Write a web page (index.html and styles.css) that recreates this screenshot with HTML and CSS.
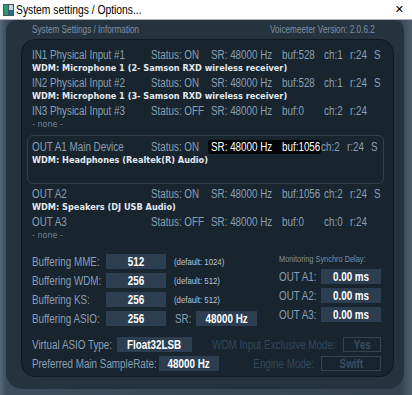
FILE: index.html
```html
<!DOCTYPE html>
<html lang="en">
<head>
    <meta charset="UTF-8">
    <title>System settings / Options...</title>
    <link rel="stylesheet" href="styles.css">
</head>
<body>
    <!-- Window title bar -->
    <div class="titlebar">
        <svg class="app-icon" width="11" height="12" viewBox="0 0 11 12">
            <rect x="0" y="0" width="11" height="12" fill="#3b5566"/>
            <rect x="1" y="1" width="4" height="10" fill="#2f9a6a"/>
            <rect x="6" y="1" width="4" height="10" fill="#c9d6df"/>
            <rect x="6" y="6" width="4" height="5" fill="#1d6f8c"/>
        </svg>
        <span class="title">System settings / Options...</span>
        <span class="close">✕</span>
    </div>

    <div class="window">
        <div class="frame">
            <div class="header">
                <span>System Settings / Information</span>
                <span>Voicemeeter Version: 2.0.6.2</span>
            </div>

            <div class="panel">
                <!-- Device list -->
                <div class="devices">
                    <div class="device">
                        <div class="dev-row">
                            <span class="c-name">IN1 Physical Input #1</span>
                            <span class="c-status">Status: ON</span>
                            <span class="c-sr">SR: 48000 Hz</span>
                            <span class="c-buf">buf:528</span>
                            <span class="c-ch">ch:1</span>
                            <span class="c-r">r:24</span>
                            <span class="c-s">S</span>
                        </div>
                        <div class="dev-driver">WDM: Microphone 1 (2- Samson RXD wireless receiver)</div>
                    </div>
                    <div class="device">
                        <div class="dev-row">
                            <span class="c-name">IN2 Physical Input #2</span>
                            <span class="c-status">Status: ON</span>
                            <span class="c-sr">SR: 48000 Hz</span>
                            <span class="c-buf">buf:528</span>
                            <span class="c-ch">ch:1</span>
                            <span class="c-r">r:24</span>
                            <span class="c-s">S</span>
                        </div>
                        <div class="dev-driver">WDM: Microphone 1 (3- Samson RXD wireless receiver)</div>
                    </div>
                    <div class="device">
                        <div class="dev-row">
                            <span class="c-name">IN3 Physical Input #3</span>
                            <span class="c-status">Status: OFF</span>
                            <span class="c-sr">SR: 48000 Hz</span>
                            <span class="c-buf">buf:0</span>
                            <span class="c-ch">ch:2</span>
                            <span class="c-r">r:24</span>
                        </div>
                        <div class="dev-none">- none -</div>
                    </div>

                    <div class="device main">
                        <div class="dev-row">
                            <span class="c-name">OUT A1 Main Device</span>
                            <span class="c-status">Status: ON</span>
                            <span class="hl">
                                <span class="c-sr">SR: 48000 Hz</span>
                                <span class="c-buf">buf:1056</span>
                            </span>
                            <span class="c-ch">ch:2</span>
                            <span class="c-r">r:24</span>
                            <span class="c-s">S</span>
                        </div>
                        <div class="dev-driver">WDM: Headphones (Realtek(R) Audio)</div>
                    </div>

                    <div class="device">
                        <div class="dev-row">
                            <span class="c-name">OUT A2</span>
                            <span class="c-status">Status: ON</span>
                            <span class="c-sr">SR: 48000 Hz</span>
                            <span class="c-buf">buf:1056</span>
                            <span class="c-ch">ch:2</span>
                            <span class="c-r">r:24</span>
                            <span class="c-s">S</span>
                        </div>
                        <div class="dev-driver">WDM: Speakers (DJ USB Audio)</div>
                    </div>
                    <div class="device">
                        <div class="dev-row">
                            <span class="c-name">OUT A3</span>
                            <span class="c-status">Status: OFF</span>
                            <span class="c-sr">SR: 48000 Hz</span>
                            <span class="c-buf">buf:0</span>
                            <span class="c-ch">ch:0</span>
                            <span class="c-r">r:24</span>
                        </div>
                        <div class="dev-none">- none -</div>
                    </div>
                </div>

                <!-- Buffering and delay settings -->
                <div class="settings">
                    <div class="buffering">
                        <div class="set-row">
                            <span class="set-label">Buffering MME:</span>
                            <span class="val w60"><span>512</span></span>
                            <span class="hint">(default: 1024)</span>
                        </div>
                        <div class="set-row">
                            <span class="set-label">Buffering WDM:</span>
                            <span class="val w60"><span>256</span></span>
                            <span class="hint">(default: 512)</span>
                        </div>
                        <div class="set-row">
                            <span class="set-label">Buffering KS:</span>
                            <span class="val w60"><span>256</span></span>
                            <span class="hint">(default: 512)</span>
                        </div>
                        <div class="set-row">
                            <span class="set-label">Buffering ASIO:</span>
                            <span class="val w60"><span>256</span></span>
                            <span class="sr-label">SR:</span>
                            <span class="val w61"><span>48000 Hz</span></span>
                        </div>
                    </div>

                    <div class="monitor">
                        <div class="monitor-title">Monitoring Synchro Delay:</div>
                        <div class="mon-row">
                            <span class="mon-label">OUT A1:</span>
                            <span class="val w60"><span>0.00 ms</span></span>
                        </div>
                        <div class="mon-row">
                            <span class="mon-label">OUT A2:</span>
                            <span class="val w60"><span>0.00 ms</span></span>
                        </div>
                        <div class="mon-row">
                            <span class="mon-label">OUT A3:</span>
                            <span class="val w60"><span>0.00 ms</span></span>
                        </div>
                    </div>
                </div>

                <div class="bottom-row first">
                    <div class="side">
                        <span class="set-label asio-label">Virtual ASIO Type:</span>
                        <span class="val asio"><span>Float32LSB</span></span>
                    </div>
                    <div class="side right">
                        <span class="dim-label">WDM Input Exclusive Mode:</span>
                        <span class="val dim yes"><span>Yes</span></span>
                    </div>
                </div>
                <div class="bottom-row">
                    <div class="side">
                        <span class="set-label pref-label">Preferred Main SampleRate:</span>
                        <span class="val pref"><span>48000 Hz</span></span>
                    </div>
                    <div class="side right">
                        <span class="dim-label">Engine Mode:</span>
                        <span class="val dim w60"><span>Swift</span></span>
                    </div>
                </div>
            </div>
        </div>
    </div>
</body>
</html>
```

FILE: styles.css
```css
/* Page = the dialog window */
body {
    margin: 0;
    width: 412px;
    height: 395px;
    overflow: hidden;
    font-family: "Liberation Sans", Arial, sans-serif;
    background-color: #3a4a58;
    white-space: nowrap;
}

/* The skin uses a narrow face: squeeze the text horizontally */
.title,
.header span,
.dev-row span,
.set-label,
.hint,
.sr-label,
.monitor-title,
.mon-label,
.dim-label,
.val span {
    display: inline-block;
    transform: scaleX(0.82);
    transform-origin: 0 50%;
}

.header span:last-child,
.dim-label {
    transform-origin: 100% 50%;
}

.val span {
    transform-origin: 50% 50%;
}

.dev-row .hl {
    transform: none;
}

/* Title bar */
.titlebar {
    height: 19px;
    background-color: #fff;
    border-bottom: 1px solid #aab3bb;
    display: flex;
    align-items: center;
    font-size: 12px;
    color: #000;
}

.app-icon {
    margin-left: 3px;
}

.titlebar .title {
    margin-left: 2px;
    transform: scaleX(0.86);
}

.close {
    margin-left: auto;
    margin-right: 8px;
    font-family: "DejaVu Sans", sans-serif;
    font-size: 11px;
}

/* Dark skin of the dialog */
.window {
    height: 375px;
    background: linear-gradient(90deg, #56687a 0, #3d4d5b 6px, #34434f 400px, #50606e 412px);
}

.frame {
    margin-left: 6px;
    width: 398px;
    height: 369px;
    box-sizing: border-box;
    padding: 0 10px 0 15px;
    background-color: #25333f;
    border-radius: 10px 10px 16px 16px;
}

.header {
    height: 19px;
    display: flex;
    justify-content: space-between;
    align-items: center;
    padding: 0 19px 0 11px;
    font-size: 10px;
    color: #7f8fa0;
}

.panel {
    height: 338px;
    box-sizing: border-box;
    padding: 7px 12px 0 10px;
    background-color: #18252f;
    border: 1px solid #0f1820;
    border-radius: 14px;
    color: #8a9fb3;
}

/* Device list */
.devices {
    margin-left: -5px;
    margin-right: -3px;
}

.device {
    padding-left: 5px;
}

.device.main {
    padding: 3px 0 16px 4px;
    border: 1px solid #2f4252;
    border-radius: 6px;
    margin: 4px 0 2px;
}

.dev-row {
    height: 15px;
    display: flex;
    align-items: center;
    font-size: 12px;
}

.dev-row span {
    flex: none;
}

.c-name { width: 119px; }
.c-status { width: 60px; }
.c-sr { width: 71px; }
.c-buf { width: 42px; }
.c-ch { width: 26px; }
.c-r { width: 24px; }

.dev-row .hl {
    display: flex;
    align-items: center;
    height: 14px;
    width: 110px;
    margin-left: -3px;
    padding-left: 3px;
    background-color: #030507;
    border-radius: 3px;
    color: #fff;
}

.hl .c-sr { width: 71px; }
.hl .c-buf { width: 39px; }

.dev-driver {
    height: 13px;
    line-height: 13px;
    font-family: "DejaVu Sans", sans-serif;
    font-size: 8.2px;
    font-weight: bold;
    color: #e3e9ef;
}

.dev-none {
    height: 13px;
    line-height: 13px;
    font-family: "DejaVu Sans", sans-serif;
    font-size: 8px;
    color: #6f8497;
}

/* Buffering / delay block */
.settings {
    margin-top: 12px;
    display: flex;
    justify-content: space-between;
}

.buffering,
.monitor {
    display: flex;
    flex-direction: column;
    gap: 4px;
}

.set-row,
.mon-row {
    height: 15px;
    display: flex;
    align-items: center;
    font-size: 12px;
}

.set-label {
    flex: none;
    width: 74px;
}

.val {
    flex: none;
    height: 15px;
    display: flex;
    align-items: center;
    justify-content: center;
    background-color: #2c3e4f;
    color: #fff;
    font-weight: bold;
    font-size: 12px;
}

.w60 { width: 60px; }
.w61 { width: 61px; }

.hint {
    margin-left: 8px;
    font-size: 9.5px;
    color: #b8c6d3;
}

.sr-label {
    flex: none;
    margin-left: 9px;
    width: 21px;
}

.monitor {
    width: 102px;
}

.monitor-title {
    height: 10px;
    line-height: 10px;
    margin-bottom: 1px;
    font-size: 9px;
    color: #7f8fa0;
}

.mon-label {
    flex: none;
    width: 42px;
}

/* Bottom rows */
.bottom-row {
    height: 15px;
    display: flex;
    justify-content: space-between;
    align-items: center;
    margin-top: 4px;
    font-size: 12px;
}

.bottom-row.first {
    margin-top: 11px;
}

.side {
    display: flex;
    align-items: center;
}

.side.right {
    width: 165px;
    justify-content: flex-end;
}

.asio-label { width: 85px; }
.pref-label { width: 127px; }

.asio {
    width: 75px;
}

.pref {
    width: 60px;
}

.dim-label {
    flex: none;
    color: #34475a;
    margin-right: 7px;
}

.val.dim {
    box-sizing: border-box;
    background-color: transparent;
    border: 1px solid #31444f;
    color: #3a4e60;
}

.yes {
    width: 38px;
}
```
